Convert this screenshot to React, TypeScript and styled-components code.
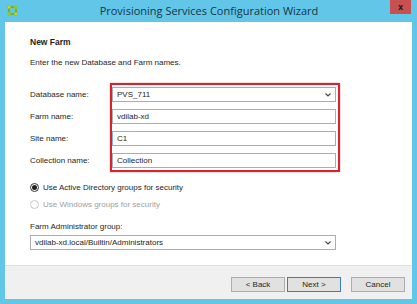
import React from "react";
import styled, { createGlobalStyle } from "styled-components";

const Global = createGlobalStyle`
  html, body { margin: 0; padding: 0; background: #62c6e8; }
  * { box-sizing: border-box; }
`;

const Window = styled.div`
  width: 417px;
  height: 304px;
  background: #62c6e8;
  display: flex;
  flex-direction: column;
  font-family: "Liberation Sans", Arial, sans-serif;
  color: #1e1e1e;
  overflow: hidden;
`;

const TitleBar = styled.div`
  height: 22px;
  display: grid;
  grid-template-columns: 1fr auto 1fr;
  align-items: start;
  padding: 0 6px 0 7px;
`;

const AppIcon = styled.svg`
  margin-top: 5px;
  width: 11px;
  height: 11px;
`;

const Title = styled.div`
  font-family: "Open Sans", "Noto Sans", sans-serif;
  font-size: 11px;
  line-height: 22px;
  color: #1a3446;
`;

const CloseButton = styled.div`
  justify-self: end;
  width: 21px;
  height: 14px;
  background: #c75050;
  display: flex;
  align-items: center;
  justify-content: center;
  color: #222;
  font-family: "DejaVu Sans", sans-serif;
  font-weight: bold;
  font-size: 8px;
`;

const Client = styled.div`
  flex: 1;
  margin: 0 5px 5px 5px;
  background: #fff;
  display: flex;
  flex-direction: column;
`;

const Content = styled.div`
  flex: 1;
  padding: 14px 0 0 25px;
  font-size: 8px;
`;

const Heading = styled.div`
  font-weight: bold;
  font-size: 8.5px;
  line-height: 12px;
`;

const Intro = styled.div`
  margin-top: 9px;
  line-height: 12px;
`;

const FormArea = styled.div`
  display: flex;
  margin-top: 14px;
`;

const LabelColumn = styled.div`
  width: 80px;
  display: flex;
  flex-direction: column;
  gap: 7px;
  padding-top: 4px;
`;

const Label = styled.div`
  height: 15px;
  line-height: 15px;
`;

const Highlight = styled.div`
  border: 2px solid #d6232f;
  box-shadow: 0 0 2px rgba(160, 0, 0, 0.35);
  padding: 2px 2px 2px 0;
  display: flex;
  flex-direction: column;
  gap: 7px;
`;

const Field = styled.div<{ $focused?: boolean; $width?: number }>`
  width: ${(p) => p.$width ?? 224}px;
  height: 15px;
  border: 1px solid ${(p) => (p.$focused ? "#7eb4ea" : "#abadb3")};
  background: #fff;
  display: flex;
  align-items: center;
  padding: 0 4px;
  font-size: 8px;
`;

const FieldText = styled.span`
  flex: 1;
`;

const Chevron = styled.svg`
  width: 6px;
  height: 4px;
`;

const RadioRow = styled.div<{ $disabled?: boolean }>`
  display: flex;
  align-items: center;
  gap: 4px;
  height: 12px;
  color: ${(p) => (p.$disabled ? "#a0a0a0" : "#1e1e1e")};
`;

const Radios = styled.div`
  margin-top: 9px;
  display: flex;
  flex-direction: column;
  gap: 5px;
`;

const RadioCircle = styled.span<{ $checked?: boolean; $disabled?: boolean }>`
  width: 9px;
  height: 9px;
  border-radius: 50%;
  border: 1px solid ${(p) => (p.$disabled ? "#c8c8c8" : "#333")};
  background: #fff;
  display: flex;
  align-items: center;
  justify-content: center;
  &::after {
    content: "";
    width: 5px;
    height: 5px;
    border-radius: 50%;
    background: ${(p) => (p.$checked ? "#1e1e1e" : "transparent")};
  }
`;

const GroupLabel = styled.div`
  margin-top: 11px;
  line-height: 12px;
`;

const GroupField = styled(Field)`
  margin-top: 2px;
`;

const Footer = styled.div`
  height: 34px;
  background: #f0f0f0;
  border-top: 1px solid #dfdfdf;
  display: flex;
  justify-content: flex-end;
  align-items: flex-start;
  padding: 11px 7px 0 0;
  gap: 2px;
`;

const Button = styled.div<{ $default?: boolean; $gapBefore?: number }>`
  width: 54px;
  height: 15px;
  background: #e1e1e1;
  border: 1px solid ${(p) => (p.$default ? "#3c7fb1" : "#adadad")};
  display: flex;
  align-items: center;
  justify-content: center;
  font-size: 8px;
  margin-left: ${(p) => p.$gapBefore ?? 0}px;
`;

const ChevronIcon = () => (
  <Chevron viewBox="0 0 6 4">
    <path d="M0.5 0.5 L3 3 L5.5 0.5" fill="none" stroke="#444" strokeWidth="1.1" />
  </Chevron>
);

export default function App() {
  return (
    <Window>
      <Global />
      <TitleBar>
        <AppIcon viewBox="0 0 11 11">
          <rect x="2" y="2" width="7" height="7" fill="none" stroke="#6aa832" strokeWidth="1.6" />
          <rect x="0" y="0" width="4" height="4" fill="#8dc63f" />
          <rect x="7" y="0" width="4" height="4" fill="#8dc63f" />
          <rect x="0" y="7" width="4" height="4" fill="#8dc63f" />
          <rect x="7" y="7" width="4" height="4" fill="#8dc63f" />
          <rect x="1" y="1" width="2" height="2" fill="#d6c64a" />
          <rect x="8" y="8" width="2" height="2" fill="#d6c64a" />
        </AppIcon>
        <Title>Provisioning Services Configuration Wizard</Title>
        <CloseButton>x</CloseButton>
      </TitleBar>
      <Client>
        <Content>
          <Heading>New Farm</Heading>
          <Intro>Enter the new Database and Farm names.</Intro>
          <FormArea>
            <LabelColumn>
              <Label>Database name:</Label>
              <Label>Farm name:</Label>
              <Label>Site name:</Label>
              <Label>Collection name:</Label>
            </LabelColumn>
            <Highlight>
              <Field>
                <FieldText>PVS_711</FieldText>
                <ChevronIcon />
              </Field>
              <Field>
                <FieldText>vdilab-xd</FieldText>
              </Field>
              <Field $focused>
                <FieldText>C1</FieldText>
              </Field>
              <Field>
                <FieldText>Collection</FieldText>
              </Field>
            </Highlight>
          </FormArea>
          <Radios>
            <RadioRow>
              <RadioCircle $checked />
              Use Active Directory groups for security
            </RadioRow>
            <RadioRow $disabled>
              <RadioCircle $disabled />
              Use Windows groups for security
            </RadioRow>
          </Radios>
          <GroupLabel>Farm Administrator group:</GroupLabel>
          <GroupField $width={306}>
            <FieldText>vdilab-xd.local/Builtin/Administrators</FieldText>
            <ChevronIcon />
          </GroupField>
        </Content>
        <Footer>
          <Button>&lt; Back</Button>
          <Button $default>Next &gt;</Button>
          <Button $gapBefore={8}>Cancel</Button>
        </Footer>
      </Client>
    </Window>
  );
}
